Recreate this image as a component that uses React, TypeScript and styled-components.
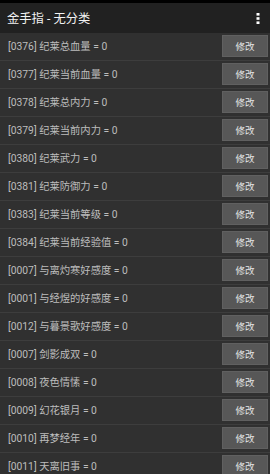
import React from "react";
import styled, { createGlobalStyle } from "styled-components";

const Global = createGlobalStyle`
  html, body { margin: 0; padding: 0; background: #303030; }
  body { font-family: Roboto, "Noto Sans CJK SC", sans-serif; overflow: hidden; }
`;

const Page = styled.div`
  width: 270px;
  height: 474px;
  background: #303030;
  display: flex;
  flex-direction: column;
  overflow: hidden;
`;

const StatusBar = styled.div`
  height: 3px;
  background: #000;
  flex: none;
`;

const TopBar = styled.div`
  height: 30px;
  background: #212121;
  display: flex;
  align-items: center;
  justify-content: space-between;
  padding: 0 7px;
  flex: none;
`;

const Title = styled.div`
  color: #f2f2f2;
  font-size: 12.3px;
  margin-top: -1px;
  font-family: Roboto, "Noto Sans CJK SC", sans-serif;
`;

const Menu = styled.svg`
  width: 4px;
  height: 11px;
  margin-right: 3px;
`;

const List = styled.div`
  display: flex;
  flex-direction: column;
`;

const Row = styled.div`
  height: 27px;
  border-bottom: 1px solid #3d3d3d;
  display: flex;
  align-items: flex-start;
  justify-content: space-between;
  padding: 0 2px 0 8px;
  flex: none;
`;

const Label = styled.div`
  color: #bdbdbd;
  font-size: 10.3px;
  line-height: 27px;
  white-space: nowrap;
`;

const EditButton = styled.div`
  margin-top: 2px;
  width: 46px;
  height: 22px;
  background: #575757;
  box-shadow: inset 0 0 0 1px #606060;
  color: #e6e6e6;
  font-size: 9.5px;
  display: flex;
  align-items: center;
  justify-content: center;
`;

const items = [
  "[0376] 纪莱总血量 = 0",
  "[0377] 纪莱当前血量 = 0",
  "[0378] 纪莱总内力 = 0",
  "[0379] 纪莱当前内力 = 0",
  "[0380] 纪莱武力 = 0",
  "[0381] 纪莱防御力 = 0",
  "[0383] 纪莱当前等级 = 0",
  "[0384] 纪莱当前经验值 = 0",
  "[0007] 与离灼寒好感度 = 0",
  "[0001] 与经煜的好感度 = 0",
  "[0012] 与暮景歌好感度 = 0",
  "[0007] 剑影成双 = 0",
  "[0008] 夜色情愫 = 0",
  "[0009] 幻花银月 = 0",
  "[0010] 再梦经年 = 0",
  "[0011] 天离旧事 = 0",
];

export default function App() {
  return (
    <Page>
      <Global />
      <StatusBar />
      <TopBar>
        <Title>金手指 - 无分类</Title>
        <Menu viewBox="0 0 4 11">
          <rect x="0.5" y="0" width="3" height="2.6" fill="#fff" />
          <rect x="0.5" y="4.2" width="3" height="2.6" fill="#fff" />
          <rect x="0.5" y="8.4" width="3" height="2.6" fill="#fff" />
        </Menu>
      </TopBar>
      <List>
        {items.map((t, i) => (
          <Row key={i}>
            <Label>{t}</Label>
            <EditButton>修改</EditButton>
          </Row>
        ))}
      </List>
    </Page>
  );
}
